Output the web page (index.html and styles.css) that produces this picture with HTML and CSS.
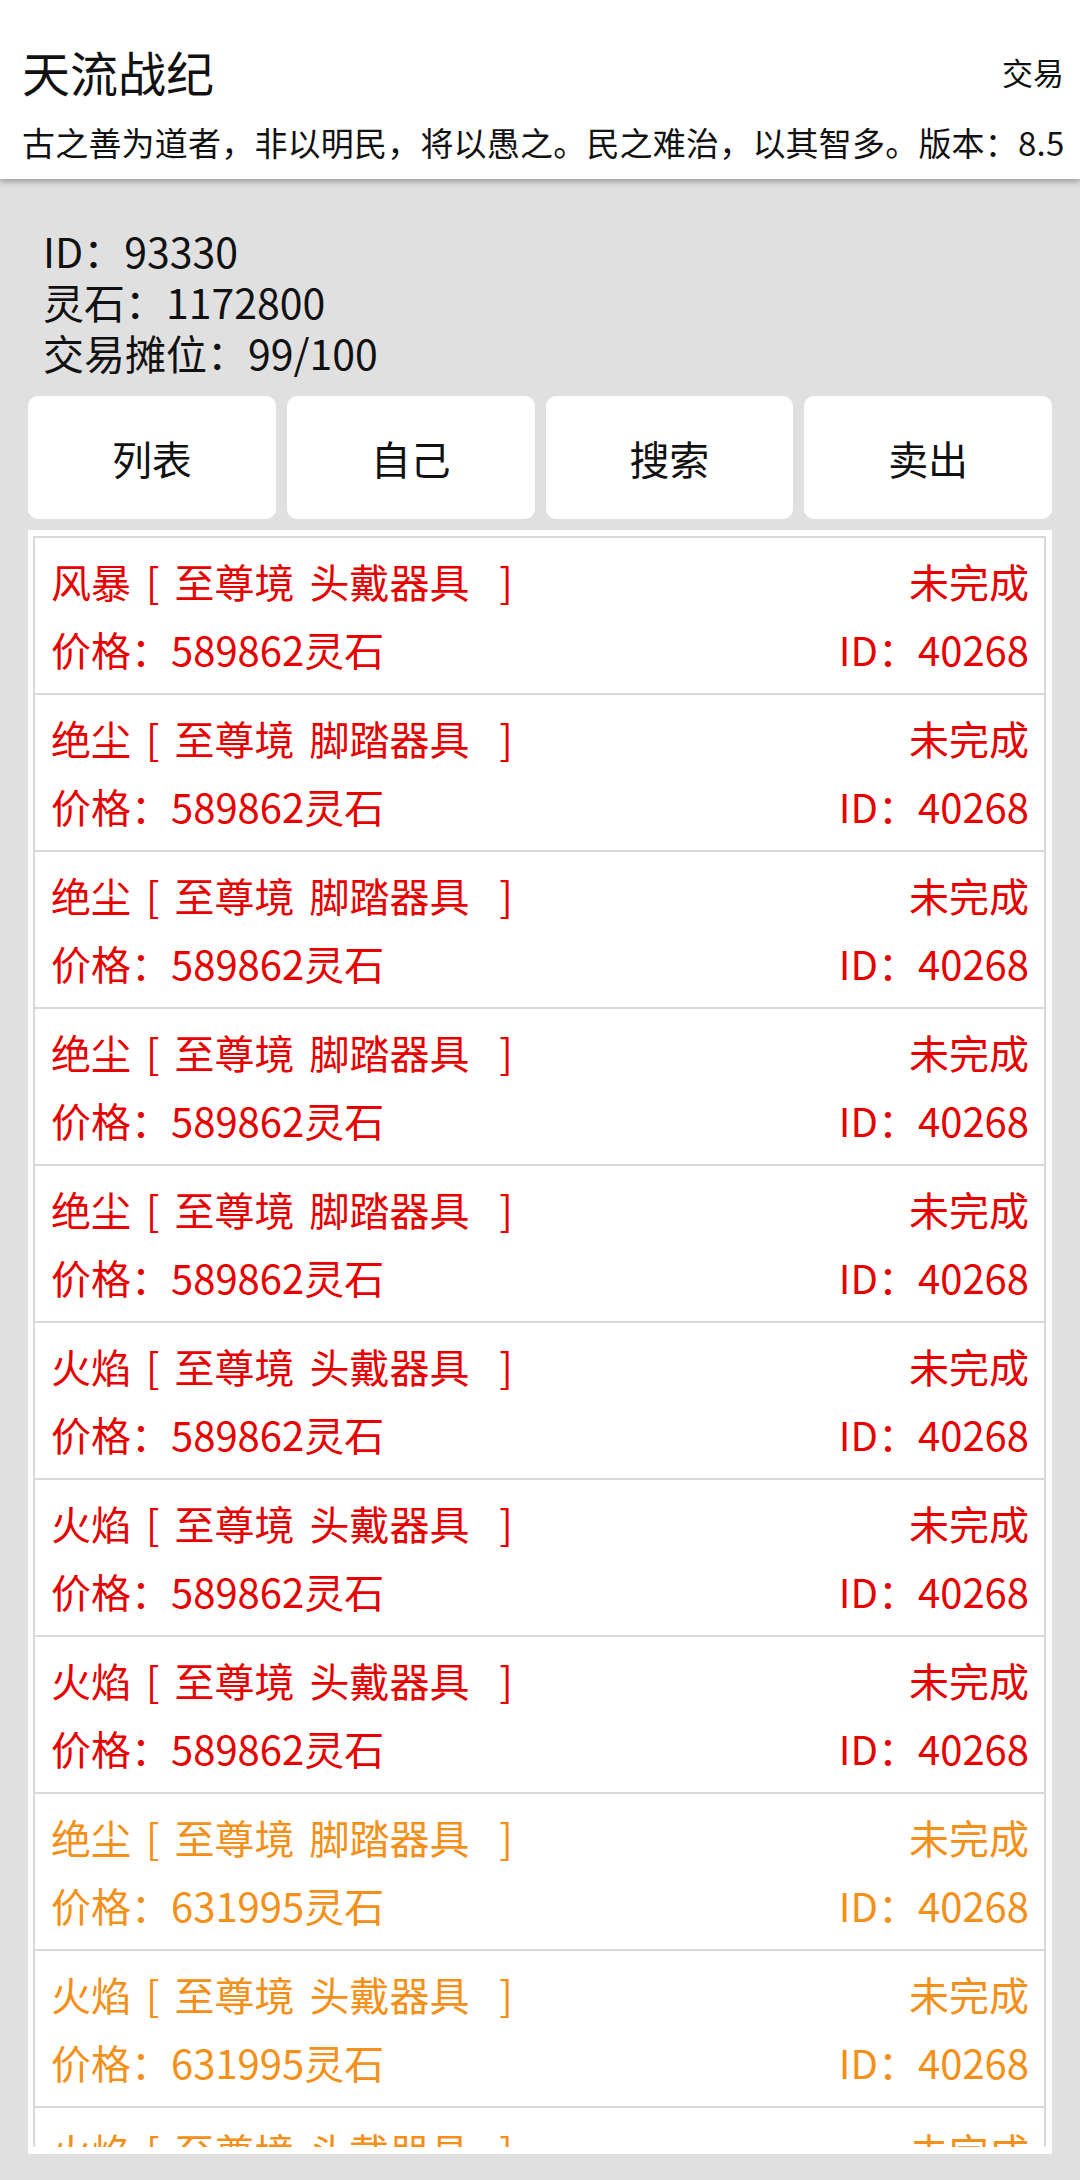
FILE: index.html
```html
<!DOCTYPE html>
<html lang="zh-CN">
<head>
    <meta charset="UTF-8">
    <meta name="viewport" content="width=device-width, initial-scale=1.0">
    <title>天流战纪 - 交易</title>
    <link rel="stylesheet" href="styles.css">
</head>
<body>

    <header class="topbar">
        <div class="title-row">
            <h1>天流战纪</h1>
            <a class="nav-link" href="#">交易</a>
        </div>
        <p class="motto">古之善为道者，非以明民，将以愚之。民之难治，以其智多。版本：8.5</p>
    </header>

    <main class="content">
        <div class="info">
            <div>ID：93330</div>
            <div>灵石：1172800</div>
            <div>交易摊位：99/100</div>
        </div>

        <div class="tabs">
            <button type="button">列表</button>
            <button type="button">自己</button>
            <button type="button">搜索</button>
            <button type="button">卖出</button>
        </div>

        <div class="market">
            <ul class="trade-list">
                <li class="trade red">
                    <div class="row"><span class="name">风暴 [ 至尊境 头戴器具  ]</span><span>未完成</span></div>
                    <div class="row"><span>价格：589862灵石</span><span>ID：40268</span></div>
                </li>
                <li class="trade red">
                    <div class="row"><span class="name">绝尘 [ 至尊境 脚踏器具  ]</span><span>未完成</span></div>
                    <div class="row"><span>价格：589862灵石</span><span>ID：40268</span></div>
                </li>
                <li class="trade red">
                    <div class="row"><span class="name">绝尘 [ 至尊境 脚踏器具  ]</span><span>未完成</span></div>
                    <div class="row"><span>价格：589862灵石</span><span>ID：40268</span></div>
                </li>
                <li class="trade red">
                    <div class="row"><span class="name">绝尘 [ 至尊境 脚踏器具  ]</span><span>未完成</span></div>
                    <div class="row"><span>价格：589862灵石</span><span>ID：40268</span></div>
                </li>
                <li class="trade red">
                    <div class="row"><span class="name">绝尘 [ 至尊境 脚踏器具  ]</span><span>未完成</span></div>
                    <div class="row"><span>价格：589862灵石</span><span>ID：40268</span></div>
                </li>
                <li class="trade red">
                    <div class="row"><span class="name">火焰 [ 至尊境 头戴器具  ]</span><span>未完成</span></div>
                    <div class="row"><span>价格：589862灵石</span><span>ID：40268</span></div>
                </li>
                <li class="trade red">
                    <div class="row"><span class="name">火焰 [ 至尊境 头戴器具  ]</span><span>未完成</span></div>
                    <div class="row"><span>价格：589862灵石</span><span>ID：40268</span></div>
                </li>
                <li class="trade red">
                    <div class="row"><span class="name">火焰 [ 至尊境 头戴器具  ]</span><span>未完成</span></div>
                    <div class="row"><span>价格：589862灵石</span><span>ID：40268</span></div>
                </li>
                <li class="trade orange">
                    <div class="row"><span class="name">绝尘 [ 至尊境 脚踏器具  ]</span><span>未完成</span></div>
                    <div class="row"><span>价格：631995灵石</span><span>ID：40268</span></div>
                </li>
                <li class="trade orange">
                    <div class="row"><span class="name">火焰 [ 至尊境 头戴器具  ]</span><span>未完成</span></div>
                    <div class="row"><span>价格：631995灵石</span><span>ID：40268</span></div>
                </li>
                <li class="trade orange">
                    <div class="row"><span class="name">火焰 [ 至尊境 头戴器具  ]</span><span>未完成</span></div>
                    <div class="row"><span>价格：631995灵石</span><span>ID：40268</span></div>
                </li>
            </ul>
        </div>
    </main>

</body>
</html>
```

FILE: styles.css
```css
body {
    font-family: "Noto Sans CJK SC", "Noto Sans", sans-serif;
    margin: 0;
    padding: 0;
    background-color: #e0e0e0;
    color: #111;
}

/* top bar */
.topbar {
    background-color: white;
    height: 179px;
    box-sizing: border-box;
    padding: 41px 16px 0 22px;
    box-shadow: 0 3px 6px rgba(0, 0, 0, 0.3);
    position: relative;
}

.title-row {
    display: flex;
    justify-content: space-between;
    align-items: center;
    height: 60px;
}

h1 {
    font-size: 48px;
    font-weight: normal;
    line-height: 60px;
    margin: 0;
}

.nav-link {
    font-size: 31px;
    color: #111;
    text-decoration: none;
}

.motto {
    font-size: 33px;
    letter-spacing: 0.2px;
    line-height: 44px;
    margin: 19px 0 0;
    white-space: nowrap;
}

/* page body */
.content {
    padding: 46px 28px 0;
}

.info {
    font-size: 41px;
    line-height: 51px;
    padding-left: 15px;
}

.tabs {
    display: grid;
    grid-template-columns: repeat(4, 1fr);
    gap: 11px;
    margin-top: 18px;
}

.tabs button {
    height: 123px;
    background-color: white;
    border: none;
    border-radius: 10px;
    font-family: inherit;
    font-size: 40px;
    color: #111;
    cursor: pointer;
}

/* trade list */
.market {
    background-color: white;
    margin-top: 11px;
    padding: 6px 6px 7px 5px;
}

.trade-list {
    list-style: none;
    margin: 0;
    padding: 0;
    height: 1611px;
    overflow: hidden;
}

.trade {
    border: 2px solid #d8d8d8;
    border-top: none;
    padding: 9px 15px 10px 16px;
}

.trade:first-child {
    border-top: 2px solid #d8d8d8;
}

.row {
    display: flex;
    justify-content: space-between;
    font-size: 40px;
    line-height: 68px;
}

.name {
    white-space: pre;
    word-spacing: 6px;
}

.red {
    color: #e60000;
}

.orange {
    color: #f39019;
}
```
